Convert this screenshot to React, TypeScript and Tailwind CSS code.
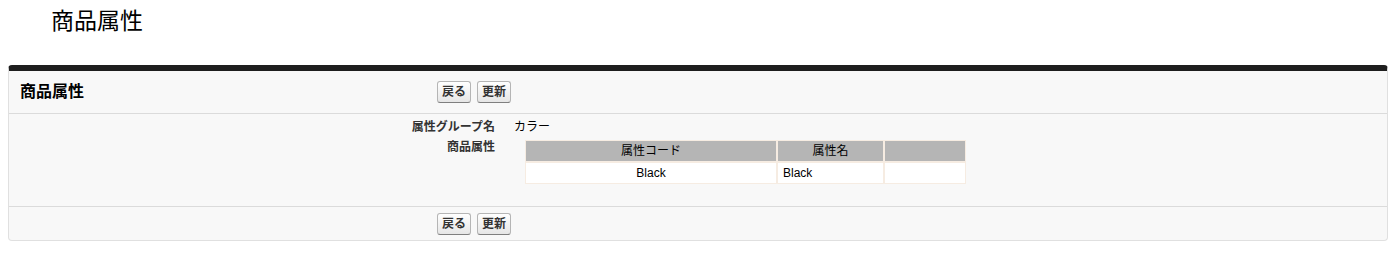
import React from "react";

const font = { fontFamily: '"Liberation Sans", "Noto Sans CJK JP", Arial, sans-serif' };

function Btn({ children }: { children: React.ReactNode }) {
  return (
    <button className="h-[22px] px-[4px] rounded-[3px] border border-[#b5b5b5] bg-gradient-to-b from-white to-[#e6e6e6] text-[12px] leading-[20px] font-bold text-[#333] border-b-[#7f7f7f]">
      {children}
    </button>
  );
}

export default function App() {
  return (
    <div className="w-[1395px] h-[256px] bg-white text-black" style={font}>
      <h1 className="pl-[51px] pt-[6px] h-[65px] text-[23px] leading-[30px] font-normal">商品属性</h1>
      <div className="ml-[8px] mr-[7px] rounded-[4px] border border-[#e0e0e0] border-t-[6px] border-t-[#1e1e1e] bg-[#f8f8f8]">
        <div className="flex items-center h-[43px] border-b border-[#dbdbdb]">
          <h2 className="w-[428px] pl-[11px] text-[16px] font-bold leading-[20px]">商品属性</h2>
          <div className="flex gap-[6px]">
            <Btn>戻る</Btn>
            <Btn>更新</Btn>
          </div>
        </div>
        <div className="h-[93px] border-b border-[#dbdbdb] pt-[3px] text-[12px]">
          <div className="flex h-[20px] items-center">
            <div className="w-[486px] text-right font-bold text-[#333]">属性グループ名</div>
            <div className="pl-[19px]">カラー</div>
          </div>
          <div className="flex mt-[1px]">
            <div className="w-[486px] text-right font-bold text-[#333] leading-[18px]">商品属性</div>
            <div className="ml-[30px] mt-[2px] grid grid-cols-[250px_105px_80px] gap-[2px] p-[1px] bg-[#f6ece2]">
              <div className="bg-[#b5b5b5] h-[20px] leading-[20px] text-center">属性コード</div>
              <div className="bg-[#b5b5b5] h-[20px] leading-[20px] text-center">属性名</div>
              <div className="bg-[#b5b5b5] h-[20px]"></div>
              <div className="bg-white h-[20px] leading-[20px] text-center">Black</div>
              <div className="bg-white h-[20px] leading-[20px] pl-[5px]">Black</div>
              <div className="bg-white h-[20px]"></div>
            </div>
          </div>
        </div>
        <div className="flex items-center h-[33px]">
          <div className="w-[428px]"></div>
          <div className="flex gap-[6px]">
            <Btn>戻る</Btn>
            <Btn>更新</Btn>
          </div>
        </div>
      </div>
    </div>
  );
}
